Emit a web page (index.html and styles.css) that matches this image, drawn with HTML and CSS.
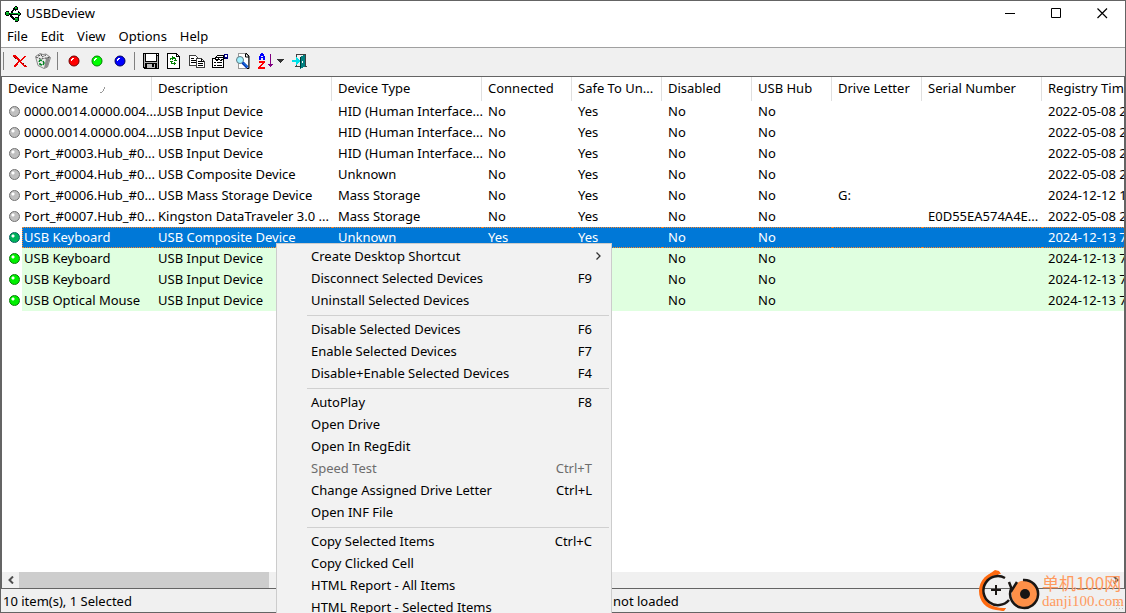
FILE: index.html
```html
<!DOCTYPE html>
<html lang="en">
<head>
<meta charset="utf-8">
<title>USBDeview</title>
<link rel="stylesheet" href="styles.css">
</head>
<body>
<div class="window">
  <header class="titlebar">
    <svg class="app-icon" width="16" height="16" viewBox="0 0 16 16" shape-rendering="crispEdges">
      <path d="M0 6h1V5h3v2h2V5h1V4h1V2h1V1h1V0h2v1h1v3h-2v1h-1V4H9v1H8v2h5V5h1v1h1v1h1v2h-1v1h-1v1h-1V9H7v1h1v1h1v1h1v-1h4v4h-1v1h-3v-2H8v-1H7v-1H6v-1H5V9H4v1H1V9H0z" fill="#000"/>
      <path d="M1 6h3v3H1zM5 7h8v1H5zM13 7h2v2h-2zM10 1h2v2h-2zM10 12h3v3h-3z" fill="#00a020"/>
      <path d="M1 6h2v1H1zM10 1h1v1h-1zM10 12h2v1h-2zM13 7h1v1h-1z" fill="#20e040"/>
    </svg>
    <h1 class="title">USBDeview</h1>
    <div class="caption">
      <button class="cap-btn" aria-label="Minimize"><svg width="11" height="11" viewBox="0 0 11 11" shape-rendering="crispEdges"><path d="M0 5h10v1H0z"/></svg></button>
      <button class="cap-btn" aria-label="Maximize"><svg width="11" height="11" viewBox="0 0 11 11"><path d="M.5.5h9v9h-9z" fill="none" stroke="#000"/></svg></button>
      <button class="cap-btn" aria-label="Close"><svg width="11" height="11" viewBox="0 0 11 11"><path d="M.5.5l9.500 9.500M10 .5L.5 10" fill="none" stroke="#000" stroke-width="1.200"/></svg></button>
    </div>
  </header>
  <nav class="menubar">
    <button>File</button><button>Edit</button><button>View</button><button>Options</button><button>Help</button>
  </nav>
  <div class="toolbar">
    <span class="sep first"></span>
    <button class="tool" aria-label="Uninstall"><svg width="16" height="16" viewBox="0 0 16 16" shape-rendering="crispEdges"><path d="M1 2h3v1h1v1h1v1h1v1h1v1h1v-1h1V5h1V4h1V3h2v1h-1v1h-1v1h-1v1h-1v1h-1v1h1v1h1v1h1v1h1v1h2v1h-3v-1h-1v-1h-1v-1H9v-1H8v-1H7v1H6v2H5v1H4v1H2v-2h1v-1h1v-1h1V9h1V7H5V6H4V5H3V4H1z" fill="#f00000"/><path d="M13 12h1v1h-1zM11 10h1v1h-1zM2 4h1v1H2zM3 5h1v1H3z" fill="#800000"/></svg></button>
    <button class="tool" aria-label="Disconnect"><svg width="16" height="16" viewBox="0 0 16 16"><path d="M.5 3.500L5 .5l3 1 3-.5 4.500 3.500L12.500 14 9 15.500l-6-3z" fill="#ececec" stroke="#888"/><path d="M11 5l4-1-2.500 9.500L9 15.500z" fill="#8a8a8a"/><path d="M1 4l5 2 5-1 4-1M6 1l1 3 4-2M3 3l3-1" fill="none" stroke="#444" stroke-dasharray="2 1"/><path d="M4 9l1-2 2 .5M8 8l1 2-1 2M7 12l-2-.5V10" fill="none" stroke="#008020" stroke-width="1.500"/></svg></button>
    <span class="sep"></span>
    <button class="tool" aria-label="Disable"><svg width="12" height="12" viewBox="0 0 12 12"><circle cx="6" cy="6" r="5" fill="#f00" stroke="#700000"/><path d="M3 4h1V3h2v1H5v1H4v1H3z" fill="#fff"/></svg></button>
    <button class="tool" aria-label="Enable"><svg width="12" height="12" viewBox="0 0 12 12"><circle cx="6" cy="6" r="5" fill="#0f0" stroke="#008000"/><path d="M3 4h1V3h2v1H5v1H4v1H3z" fill="#fff"/></svg></button>
    <button class="tool" aria-label="Disable and enable"><svg width="12" height="12" viewBox="0 0 12 12"><circle cx="6" cy="6" r="5" fill="#00f" stroke="#000060"/><path d="M3 4h1V3h2v1H5v1H4v1H3z" fill="#fff"/></svg></button>
    <span class="sep"></span>
    <button class="tool" aria-label="Save"><svg width="16" height="16" viewBox="0 0 16 16" shape-rendering="crispEdges"><path d="M0 0h16v16H1v-1H0z"/><path d="M1 1h1v13H1zM14 3h1v12h-1zM2 9h12v1H2z" fill="#b0b0b0"/><path d="M3 1h10v7H3z" fill="#fff"/><path d="M14 1h1v1h-1z" fill="#fff"/><path d="M4 11h8v4H4z" fill="#c0c0c0"/><path d="M9 11h2v3H9z"/></svg></button>
    <button class="tool" aria-label="Refresh"><svg width="16" height="16" viewBox="0 0 16 16" shape-rendering="crispEdges"><path d="M1 0h10v1h1v1h1v1h1v13H1z"/><path d="M2 1h8v3h3v11H2z" fill="#fff"/><path d="M11 2h1v1h-1z" fill="#fff"/><path d="M6 3h1v1h2v1h1v2h1v1H8V7h1V6H7v1H6V6H5V5h1zM4 8h3v1H6v1h2V9h1v1h1v1H9v1H8v-1H5V9H4zM4 5h1v2H4z" fill="#008000"/></svg></button>
    <button class="tool" aria-label="Copy"><svg width="16" height="16" viewBox="0 0 16 16" shape-rendering="crispEdges"><path d="M.5 2.500h6l2 2v8h-8z" fill="#fff" stroke="#404040"/><path d="M2 5h3v1H2zM2 7h5v1H2zM2 9h5v1H2z"/><path d="M7.500 5.500h5l3 3v6h-8z" fill="#fff" stroke="#404040"/><path d="M9 8h3v1H9zM9 10h5v1H9zM9 12h5v1H9zM12 6h1v2h2v1h-3z"/></svg></button>
    <button class="tool" aria-label="Properties"><svg width="16" height="16" viewBox="0 0 16 16" shape-rendering="crispEdges"><path d="M.5 5.500h11v9H.5z" fill="#fff" stroke="#000"/><path d="M2 9h2v1H2zM5 9h5v1H5zM2 12h2v1H2zM5 12h5v1H5z"/><path d="M2 5h1V4h1V3h1V2h7v1h1v3h-2v1h-1v1H8V7H6v1H4V7H3z"/><path d="M5 3h6v1H5zM4 5h2v1H4zM7 5h4v1H7zM8 6h1v1H8z" fill="#fff"/><path d="M12 1h4v5h-3V5h-1z" fill="#000080"/><path d="M13 2h2v2h-2z" fill="#fff"/></svg></button>
    <button class="tool" aria-label="Find"><svg width="16" height="16" viewBox="0 0 16 16"><path d="M3.500.5h7l3 3v12h-10z" fill="#fff" stroke="#999" shape-rendering="crispEdges"/><path d="M10 0h1l3 3v12.500h-2M10.500 1v3H14" fill="none" stroke="#000"/><circle cx="5" cy="7" r="3.500" fill="#a0f0ff" stroke="#607880"/><path d="M7.500 9.500l5 5" stroke="#0030b0" stroke-width="3"/><path d="M8 9.500l4.500 4.500" stroke="#20a0ff"/></svg></button>
    <button class="tool" aria-label="Sort"><svg width="16" height="16" viewBox="0 0 16 16" shape-rendering="crispEdges"><path d="M3 0h2v1h1v2h1v4H5V5H3v2H1V3h1V1h1zM3 3v1h2V3z" fill="#00f"/><path d="M1 8h6v2H6v1H5v1H4v1H3v1h4v2H0v-2h1v-1h1v-1h1v-1h1v-1H1z" fill="#f00"/><path d="M12 1h1v10h2v1h-1v1h-1v1h-1v-1h-1v-1h-1v-1h2z" fill="#800080"/></svg></button>
    <button class="tool drop" aria-label="Sort options"><svg width="7" height="4" viewBox="0 0 7 4" shape-rendering="crispEdges"><path d="M0 0h7v1H6v1H5v1H4v1H3V3H2V2H1V1H0z" fill="#333"/></svg></button>
    <button class="tool" aria-label="Exit"><svg width="16" height="16" viewBox="0 0 16 16" shape-rendering="crispEdges"><path d="M4 1h10v12h1v1h-3v-1h1V2H5v3H4zM4 10h1v3h3v1H3v-1h1z" fill="#404040"/><path d="M8 4h1V3h2V2h2v12h-2v1H9v1H8z" fill="#008080"/><path d="M8 4h1v11H8z" fill="#003838"/><path d="M10 8h1v2h-1z" fill="#fff"/><path d="M0 7h4V4h1v1h1v1h1v1h1v2H7v1H6v1H5v1H4V9H0z" fill="#00e0e8"/></svg></button>
  </div>

  <main class="list">
    <div class="viewport">
      <table class="devices">
        <colgroup><col class="w150"><col class="w180"><col class="w150"><col class="w90"><col class="w90"><col class="w90"><col class="w80"><col class="w90"><col class="w120"><col class="w150"></colgroup>
        <thead><tr><th>Device Name<svg class="sort-mark" width="5" height="6" viewBox="0 0 5 6" shape-rendering="crispEdges"><path d="M4 0h1v2H4zM3 2h1v2H3zM2 4h1v1H2zM0 5h2v1H0z" fill="#999"/></svg></th><th>Description</th><th>Device Type</th><th>Connected</th><th>Safe To Un...</th><th>Disabled</th><th>USB Hub</th><th>Drive Letter</th><th>Serial Number</th><th>Registry Time</th></tr></thead>
        <tbody>
          <tr><td><div class="name"><i class="dot"></i><span>0000.0014.0000.004....</span></div></td><td>USB Input Device</td><td>HID (Human Interface...</td><td>No</td><td>Yes</td><td>No</td><td>No</td><td></td><td></td><td>2022-05-08 2</td></tr>
          <tr><td><div class="name"><i class="dot"></i><span>0000.0014.0000.004....</span></div></td><td>USB Input Device</td><td>HID (Human Interface...</td><td>No</td><td>Yes</td><td>No</td><td>No</td><td></td><td></td><td>2022-05-08 2</td></tr>
          <tr><td><div class="name"><i class="dot"></i><span>Port_#0003.Hub_#0...</span></div></td><td>USB Input Device</td><td>HID (Human Interface...</td><td>No</td><td>Yes</td><td>No</td><td>No</td><td></td><td></td><td>2022-05-08 2</td></tr>
          <tr><td><div class="name"><i class="dot"></i><span>Port_#0004.Hub_#0...</span></div></td><td>USB Composite Device</td><td>Unknown</td><td>No</td><td>Yes</td><td>No</td><td>No</td><td></td><td></td><td>2022-05-08 2</td></tr>
          <tr><td><div class="name"><i class="dot"></i><span>Port_#0006.Hub_#0...</span></div></td><td>USB Mass Storage Device</td><td>Mass Storage</td><td>No</td><td>Yes</td><td>No</td><td>No</td><td>G:</td><td></td><td>2024-12-12 1</td></tr>
          <tr><td><div class="name"><i class="dot"></i><span>Port_#0007.Hub_#0...</span></div></td><td>Kingston DataTraveler 3.0 ...</td><td>Mass Storage</td><td>No</td><td>Yes</td><td>No</td><td>No</td><td></td><td>E0D55EA574A4E...</td><td>2022-05-08 2</td></tr>
          <tr class="selected"><td><div class="name"><i class="dot"></i><span>USB Keyboard</span></div></td><td>USB Composite Device</td><td>Unknown</td><td>Yes</td><td>Yes</td><td>No</td><td>No</td><td></td><td></td><td>2024-12-13 7</td></tr>
          <tr class="on"><td><div class="name"><i class="dot"></i><span>USB Keyboard</span></div></td><td>USB Input Device</td><td></td><td></td><td></td><td>No</td><td>No</td><td></td><td></td><td>2024-12-13 7</td></tr>
          <tr class="on"><td><div class="name"><i class="dot"></i><span>USB Keyboard</span></div></td><td>USB Input Device</td><td></td><td></td><td></td><td>No</td><td>No</td><td></td><td></td><td>2024-12-13 7</td></tr>
          <tr class="on"><td><div class="name"><i class="dot"></i><span>USB Optical Mouse</span></div></td><td>USB Input Device</td><td></td><td></td><td></td><td>No</td><td>No</td><td></td><td></td><td>2024-12-13 7</td></tr>
        </tbody>
      </table>
    </div>
    <div class="scrollbar">
      <button class="arrow" aria-label="Scroll left"><svg width="6" height="8" viewBox="0 0 6 8"><path d="M5 .5L1.500 4 5 7.500" fill="none" stroke="#505050" stroke-width="2"/></svg></button>
      <div class="track"><div class="thumb"></div></div>
      <button class="arrow" aria-label="Scroll right"><svg width="6" height="8" viewBox="0 0 6 8"><path d="M1 .5L4.500 4 1 7.500" fill="none" stroke="#505050" stroke-width="2"/></svg></button>
    </div>
  </main>
  <footer class="status">
    <span>10 item(s), 1 Selected</span><span>not loaded</span>
    <i class="grip"></i>
  </footer>
</div>

<div class="popup" role="menu">
  <button role="menuitem"><span>Create Desktop Shortcut</span><svg class="more" width="5" height="8" viewBox="0 0 5 8"><path d="M.5.5L4 4 .5 7.500" fill="none" stroke="#333" stroke-width="1.300"/></svg></button>
  <button role="menuitem"><span>Disconnect Selected Devices</span><kbd>F9</kbd></button>
  <button role="menuitem"><span>Uninstall Selected Devices</span></button>
  <hr>
  <button role="menuitem"><span>Disable Selected Devices</span><kbd>F6</kbd></button>
  <button role="menuitem"><span>Enable Selected Devices</span><kbd>F7</kbd></button>
  <button role="menuitem"><span>Disable+Enable Selected Devices</span><kbd>F4</kbd></button>
  <hr>
  <button role="menuitem"><span>AutoPlay</span><kbd>F8</kbd></button>
  <button role="menuitem"><span>Open Drive</span></button>
  <button role="menuitem"><span>Open In RegEdit</span></button>
  <button role="menuitem" disabled><span>Speed Test</span><kbd>Ctrl+T</kbd></button>
  <button role="menuitem"><span>Change Assigned Drive Letter</span><kbd>Ctrl+L</kbd></button>
  <button role="menuitem"><span>Open INF File</span></button>
  <hr>
  <button role="menuitem"><span>Copy Selected Items</span><kbd>Ctrl+C</kbd></button>
  <button role="menuitem"><span>Copy Clicked Cell</span></button>
  <button role="menuitem"><span>HTML Report - All Items</span></button>
  <button role="menuitem"><span>HTML Report - Selected Items</span></button>
</div>

<div class="mark">
  <svg width="64" height="42" viewBox="0 0 64 42">
    <path d="M22 2C10 1 1 10 1 21c0 10 7 18 17 19l8 1 2-3C15 39 5 32 5 21 5 12 11 5 20 5z" fill="#ff6a10"/>
    <path d="M10 5L17 0l4 1 2 3zM15 38l10 3 3-3z" fill="#ff6a10"/>
    <path d="M27 8A14.500 14.500 0 1 0 31 30" fill="none" stroke="#1a1614" stroke-width="2.500"/>
    <path d="M13 20h10M18 15v10" stroke="#1a1614" stroke-width="2"/>
    <circle cx="47" cy="24" r="13.500" fill="#ff9048"/>
    <path d="M45 10a14 14 0 1 1-12 9M31 12l3 8 5-8" fill="none" stroke="#1a1614" stroke-width="2.500"/>
    <circle cx="47" cy="24" r="5" fill="#1a1614"/>
  </svg>
  <div class="mark-text"><span class="mark-cn">单机100网</span><span class="mark-url">danji100.com</span></div>
</div>
</body>
</html>
```
FILE: styles.css
```css
* { box-sizing: border-box; }

body {
  margin: 0;
  height: 100vh;
  overflow: hidden;
  position: relative;
  font: 13px/20px "Noto Sans", "Noto Sans CJK SC", sans-serif;
  color: #000;
}

button {
  border: 0;
  padding: 0;
  background: none;
  font: inherit;
  color: inherit;
}

svg { display: block; flex: none; }

.window {
  display: flex;
  flex-direction: column;
  height: 100%;
  border: 1px solid #646464;
  background: #fff;
}

.titlebar {
  display: flex;
  align-items: center;
  height: 25px;
  padding-left: 4px;
  gap: 5px;
}
.title { margin: 0; flex: 1; height: 22px; font-size: 13px; font-weight: 400; }
.caption { display: flex; height: 100%; }
.cap-btn { width: 46px; display: flex; align-items: center; justify-content: center; }

.menubar { display: flex; height: 21px; gap: 13px; padding: 0 6px; }
.menubar button { height: 20px; }

.toolbar {
  display: flex;
  align-items: center;
  height: 29px;
  padding-bottom: 3px;
  background: #f0f0f0;
  border-top: 1px solid #a0a0a0;
}
.sep { width: 8px; height: 18px; display: flex; padding-left: 3px; }
.sep.first { width: 7px; padding-left: 2px; }
.sep::before { content: ""; width: 1px; background: #808080; }
.tool { width: 23px; height: 24px; display: flex; align-items: center; justify-content: center; }
.tool.drop { width: 11px; justify-content: flex-start; }

.list {
  flex: 1;
  min-height: 0;
  display: flex;
  flex-direction: column;
  border: 1px solid #646464;
}
.viewport { flex: 1; min-height: 0; overflow: hidden; }

.devices { width: 1190px; table-layout: fixed; border-collapse: separate; border-spacing: 0; }
.w80 { width: 80px; }
.w90 { width: 90px; }
.w120 { width: 120px; }
.w150 { width: 150px; }
.w180 { width: 180px; }
.devices th, .devices td { padding: 0 0 0 6px; text-align: left; font-weight: 400; white-space: nowrap; }
.devices th { height: 24px; padding-bottom: 2px; border-right: 1px solid #e0e0e0; }
.devices td { height: 21px; line-height: 19px; border: 1px solid transparent; border-width: 1px 0; }
.devices td:first-child { padding: 0; border: 0; }
.sort-mark { display: inline-block; margin-left: 12px; }

.name { display: flex; align-items: center; height: 21px; }
.name span { flex: 1; height: 21px; padding-left: 2px; border: 1px solid transparent; border-width: 1px 0; }
.dot {
  flex: none;
  width: 11px;
  height: 11px;
  margin: 0 2px 0 7px;
  border: 1px solid #707070;
  border-radius: 50%;
  background: radial-gradient(circle at 3px 3px, #fff 1px, #c0c0c0 2px);
}
.on .dot { border-color: #008000; background: radial-gradient(circle at 3px 3px, #fff 1px, #00f000 2px); }
.selected .dot { border-color: #00605a; background: radial-gradient(circle at 3px 3px, #fff 1px, #00b45a 2px); }
.on td:not(:first-child), .on .name span { background: #e0ffe0; }
.selected td:not(:first-child), .selected .name span {
  color: #fff;
  background: #0078d7;
  border-style: dotted;
  border-color: #ff8728;
}
.selected .name span { border-left-width: 1px; padding-left: 1px; }

.scrollbar { display: flex; height: 16px; background: #f0f0f0; }
.arrow { width: 17px; display: flex; align-items: center; justify-content: center; }
.track { flex: 1; display: flex; }
.thumb { width: 23%; background: #cdcdcd; }

.status {
  display: grid;
  grid-template-columns: 612px 1fr;
  height: 23px;
  padding-top: 2px;
  background: #f0f0f0;
  position: relative;
}
.status span:first-child { padding-left: 2px; }
.grip {
  position: absolute;
  right: 2px;
  bottom: 3px;
  width: 8px;
  height: 8px;
  background: radial-gradient(#bbb 1px, transparent 1px) 0 0 / 3px 3px;
}

.popup {
  position: absolute;
  left: 276px;
  top: 243px;
  width: 336px;
  padding: 2px;
  background: #f2f2f2;
  border: 1px solid #ccc;
}
.popup button {
  width: 100%;
  height: 22px;
  display: flex;
  align-items: center;
  justify-content: space-between;
  padding: 0 17px 2px 32px;
  text-align: left;
}
.popup button:disabled { color: #6d6d6d; }
.popup kbd { font: inherit; }
.popup hr { height: 1px; margin: 3px 0 3px 28px; border: 0; background: #d0d0d0; }
.more { margin-right: -9px; }

.mark {
  position: absolute;
  right: 2px;
  bottom: 1px;
  display: flex;
  align-items: center;
}
.mark-text { display: flex; flex-direction: column; color: #ff9a5e; white-space: nowrap; }
.mark-cn { font: 17px/19px "Noto Sans CJK SC", sans-serif; }
.mark-url { font: 15px/18px "Liberation Serif", serif; }
```
